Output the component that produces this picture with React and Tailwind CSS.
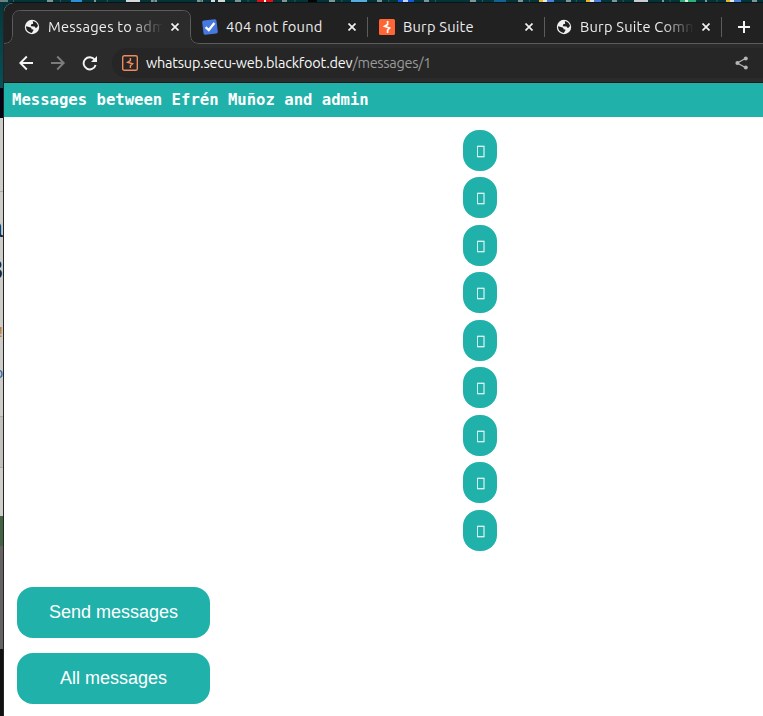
import React from "react";

const UI = "font-['Ubuntu','Noto_Sans','Open_Sans',sans-serif]";

function Globe() {
  return (
    <svg className="size-4 shrink-0" viewBox="0 0 16 16">
      <circle cx="8" cy="8" r="7.2" fill="#f1f1f1" />
      <path d="M2.2 7.2 L6.6 8.4 Q8 9 7.4 10.2 L9.2 10.4 Q10 11.2 9 12 L7.8 13.9 Q3 13.5 2 8.6Z" fill="#202020" />
      <path d="M8.8 2 Q13.2 3 14 7 L12.2 8.9 Q10.8 8.8 10.6 7.6 L7.2 7.2 Q6.2 6.2 7.4 5.2 L9.2 4.8 Z" fill="#202020" />
    </svg>
  );
}

function Check() {
  return (
    <svg className="size-4 shrink-0" viewBox="0 0 16 16">
      <rect x="0.8" y="0.8" width="14.4" height="14.4" rx="1.8" fill="#4678de" transform="rotate(-7 8 8)" />
      <path d="M3.6 8.2 L6.8 11 L12.4 4" fill="none" stroke="#fff" strokeWidth="2.3" />
    </svg>
  );
}

function BurpTab() {
  return (
    <svg className="size-4 shrink-0" viewBox="0 0 16 16">
      <rect width="16" height="16" rx="1.5" fill="#ff6633" />
      <path d="M8.6 2 V5.4 L5.6 7.2 L10.6 9 L8.6 11 V14" fill="none" stroke="#fff" strokeWidth="1.7" />
    </svg>
  );
}

function BurpSite() {
  return (
    <svg className="size-4 shrink-0" viewBox="0 0 16 16">
      <rect x="0.7" y="0.7" width="14.6" height="14.6" rx="1.6" fill="none" stroke="#f08a5d" strokeWidth="1.4" />
      <path d="M8.4 3 V5.6 L5.6 7.2 L10.6 8.8 L8.4 10.6 V13" fill="none" stroke="#f08a5d" strokeWidth="1.4" />
    </svg>
  );
}

function Close() {
  return (
    <svg className="size-2 shrink-0" viewBox="0 0 8 8">
      <path d="M0.5 0.5 L7.5 7.5 M7.5 0.5 L0.5 7.5" stroke="#f0f0f0" strokeWidth="1.7" />
    </svg>
  );
}

function Tab({ icon, title, className, fade }) {
  return (
    <div className={`flex h-[34px] shrink-0 items-center ${className}`}>
      {icon}
      <div className={`ml-2 mr-2 flex-1 overflow-hidden whitespace-nowrap text-[14.67px] leading-5 tracking-[0.22px] text-[#ededed] ${fade ? "[mask-image:linear-gradient(to_right,#000_72%,transparent)]" : ""}`}>
        {title}
      </div>
      <Close />
    </div>
  );
}

const slivers = [
  [0, 8, "#6e8080"], [47, 6, "#7f9696"], [71, 11, "#2b8fdb"], [94, 2, "#7f9696"], [126, 14, "#d8d8d8"],
  [151, 6, "#7f9696"], [197, 6, "#7f9696"], [211, 4, "#d8d8d8"], [218, 7, "#d8d8d8"], [235, 6, "#7f9696"],
  [257, 16, "#e01010"], [264, 2, "#ffffff"], [282, 5, "#7f9696"], [308, 9, "#050505"], [329, 6, "#7f9696"],
  [351, 16, "#55aede"], [377, 5, "#7f9696"], [398, 16, "#1556dc"], [403, 5, "#c5d5f8"], [424, 5, "#7f9696"],
  [470, 6, "#7f9696"], [494, 12, "#126395"], [518, 5, "#7f9696"], [539, 5, "#e8b52d"], [543, 4, "#e8e8e8"],
  [547, 7, "#4c7fdb"], [566, 5, "#7f9696"], [586, 5, "#e8b52d"], [590, 4, "#e8e8e8"], [594, 7, "#4c7fdb"],
  [612, 5, "#7f9696"], [634, 14, "#cccccc"], [662, 2, "#7f9696"], [680, 16, "#2cb178"], [685, 3, "#d9f0e6"],
  [705, 2, "#7f9696"], [726, 5, "#e8b52d"], [730, 4, "#e8e8e8"], [734, 7, "#4c7fdb"], [752, 5, "#7f9696"],
];

export default function App() {
  return (
    <div className="flex h-[716px] w-[763px] flex-col overflow-hidden bg-[#03363a]">
      <svg className="h-[3px] w-full shrink-0 bg-[#03343a]" viewBox="0 0 763 3">
        {slivers.map(([x, w, fill], i) => (
          <rect key={i} x={x} y="0" width={w} height="2" fill={fill} />
        ))}
        {Array.from({ length: 16 }, (_, i) => (
          <rect key={i} x={13 + i * 46.9} width="1" height="2" fill="#315a5e" />
        ))}
        <rect x="10" y="2" width="753" height="1" fill="#061618" />
      </svg>
      <div className="flex min-h-0 flex-1">
        <aside className="flex w-1 shrink-0 flex-col overflow-hidden border-r border-[#242424] font-['Liberation_Sans',sans-serif]">
          <div className="h-[85px] shrink-0 bg-gradient-to-b from-[#03383c] to-[#075158]" />
          <div className="h-[30px] shrink-0 bg-[#030314]" />
          <div className="h-[74px] shrink-0 border-b border-[#a9a9a9] bg-[#cfcdca]" />
          <div className="flex h-[225px] shrink-0 flex-col items-end border-b border-[#a9a9a9] bg-[#cfcdca]">
            <span className="mt-[20px] text-[28px] leading-[32px] text-[#10263a]">a</span>
            <span className="mt-[10px] text-[28px] leading-[32px] text-[#222]">3</span>
            <span className="mt-[36px] text-[15px] leading-[20px] text-[#b9781c]">!</span>
            <span className="mt-[21px] text-[15px] leading-[20px] text-[#3565a8]">o</span>
          </div>
          <div className="h-[51px] shrink-0 border-b border-[#a9a9a9] bg-[#c3c1be]" />
          <div className="h-[48px] shrink-0 bg-[#d0ceca]" />
          <div className="h-[30px] shrink-0 bg-[#426343]" />
          <div className="h-[103px] shrink-0 bg-[#656361]" />
          <div className="flex-1 bg-[#111]" />
        </aside>

        <main className="flex min-w-0 flex-1 flex-col overflow-hidden rounded-tl-[9px] bg-white">
          <div className={`relative flex h-[41px] shrink-0 items-start bg-[#212121] pt-[7px] ${UI}`}>
            <svg className="absolute left-0 top-0" width="759" height="41" viewBox="0 0 759 41">
              <path d="M0 40.5 Q8.5 40.5 8.5 32 V15.5 Q8.5 7.5 16.5 7.5 H178.5 Q186.5 7.5 186.5 15.5 V32 Q186.5 40.5 195 40.5 H759" fill="none" stroke="#5c5c5c" />
              <path d="M0 41 Q9 41 9 32 V15.5 Q9 8 16.5 8 H178.5 Q186 8 186 15.5 V32 Q186 41 195 41 Z" fill="#2b2b2b" />
            </svg>
            <div className="relative flex">
              <Tab icon={<Globe />} title="Messages to admin" fade className="ml-5 w-[155px]" />
              <Tab icon={<Check />} title="404 not found" className="ml-[23px] w-[154px]" />
              <div className="mt-[7px] ml-[11px] h-5 w-px bg-[#5c5c5c]" />
              <Tab icon={<BurpTab />} title="Burp Suite" className="ml-[11px] w-[154px]" />
              <div className="mt-[7px] ml-[11px] h-5 w-px bg-[#5c5c5c]" />
              <Tab icon={<Globe />} title="Burp Suite Community" fade className="ml-[11px] w-[154px]" />
              <div className="mt-[7px] ml-[11px] h-5 w-px bg-[#5c5c5c]" />
              <svg className="mt-[11px] ml-4 size-3" viewBox="0 0 12 12">
                <path d="M6 0 V12 M0 6 H12" stroke="#f4f4f4" strokeWidth="2" />
              </svg>
            </div>
          </div>

          <div className={`flex h-[39px] shrink-0 items-center border-b border-[#191919] bg-[#2b2b2b] pl-[15px] ${UI}`}>
            <svg className="h-4 w-[78px] shrink-0" viewBox="0 0 78 16" fill="none" strokeWidth="1.9">
              <path d="M14 8 H1.5 M7.8 1.5 L1.3 8 L7.8 14.5" stroke="#f4f4f4" />
              <path d="M32 8 H44.5 M38.2 1.5 L44.7 8 L38.2 14.5" stroke="#7c7c7c" />
              <path d="M75.6 4.6 A6.1 6.1 0 1 0 76.6 10" stroke="#f4f4f4" />
              <path d="M78 1 V7 H72 Z" fill="#f4f4f4" />
            </svg>
            <div className="ml-[15px] flex h-[30px] flex-1 items-center rounded-l-full bg-[#262626] pl-[10px]">
              <BurpSite />
              <div className="ml-2 flex-1 whitespace-nowrap text-[14.5px] leading-5 text-[#9a9a9a]">
                <span className="tracking-[-0.23px] text-[#f8f8f8]">whatsup.secu-web.blackfoot.dev</span>
                <span className="tracking-[-0.3px]">/messages/1</span>
              </div>
              <svg className="mr-[15px] h-[14px] w-[13px]" viewBox="0 0 13 14">
                <path d="M11 2.2 L2.2 7 L11 11.8" fill="none" stroke="#b5b5b5" strokeWidth="1.3" />
                <circle cx="10.8" cy="2.4" r="2" fill="#b5b5b5" />
                <circle cx="2.4" cy="7" r="2" fill="#b5b5b5" />
                <circle cx="10.8" cy="11.6" r="2" fill="#b5b5b5" />
              </svg>
            </div>
          </div>

          <h1 className="h-[34px] shrink-0 bg-[#20b2aa] pt-px pl-2 font-['DejaVu_Sans_Mono',monospace] text-[15.6px] leading-[33px] font-bold whitespace-pre text-white">
            Messages between Efrén Muñoz and admin
          </h1>

          <div className="mt-[12.9px] ml-[459px] flex w-[34px] flex-col gap-[6.5px] font-['Liberation_Sans',sans-serif]">
            {Array.from({ length: 9 }, (_, i) => (
              <div key={i} className="flex h-[41px] items-center justify-center rounded-[16px] bg-[#20b2aa] pt-[3px] pl-px text-base leading-5 text-white">
                <span className="inline-block scale-x-[0.8] [-webkit-text-stroke:0.3px_white]">{"\uE83A"}</span>
              </div>
            ))}
          </div>

          <div className="mt-9 ml-[13px] flex w-[193px] flex-col gap-[15px] font-['Liberation_Sans',Arial,sans-serif]">
            <button className="h-[51px] rounded-[16px] bg-[#20b2aa] text-[18px] text-white">Send messages</button>
            <button className="h-[51px] rounded-[16px] bg-[#20b2aa] text-[18px] text-white">All messages</button>
          </div>
        </main>
      </div>
    </div>
  );
}
